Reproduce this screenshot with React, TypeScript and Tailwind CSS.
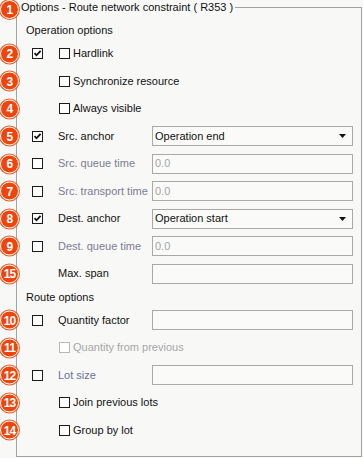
import React from 'react';

type Field = { kind: 'select'; value: string } | { kind: 'input'; placeholder?: string } | null;

type RowDef = {
    badge: string;
    outer: 'checked' | 'unchecked' | null;
    label: string;
    tone: 'normal' | 'muted' | 'lot';
    inner?: 'enabled' | 'disabled';
    field: Field;
};

const operationRows: RowDef[] = [
    { badge: '2', outer: 'checked', label: 'Hardlink', tone: 'normal', inner: 'enabled', field: null },
    { badge: '3', outer: null, label: 'Synchronize resource', tone: 'normal', inner: 'enabled', field: null },
    { badge: '4', outer: null, label: 'Always visible', tone: 'normal', inner: 'enabled', field: null },
    { badge: '5', outer: 'checked', label: 'Src. anchor', tone: 'normal', field: { kind: 'select', value: 'Operation end' } },
    { badge: '6', outer: 'unchecked', label: 'Src. queue time', tone: 'muted', field: { kind: 'input', placeholder: '0.0' } },
    { badge: '7', outer: 'unchecked', label: 'Src. transport time', tone: 'muted', field: { kind: 'input', placeholder: '0.0' } },
    { badge: '8', outer: 'checked', label: 'Dest. anchor', tone: 'normal', field: { kind: 'select', value: 'Operation start' } },
    { badge: '9', outer: 'unchecked', label: 'Dest. queue time', tone: 'muted', field: { kind: 'input', placeholder: '0.0' } },
    { badge: '15', outer: null, label: 'Max. span', tone: 'normal', field: { kind: 'input' } },
];

const routeRows: RowDef[] = [
    { badge: '10', outer: 'unchecked', label: 'Quantity factor', tone: 'normal', field: { kind: 'input' } },
    { badge: '11', outer: null, label: 'Quantity from previous', tone: 'normal', inner: 'disabled', field: null },
    { badge: '12', outer: 'unchecked', label: 'Lot size', tone: 'lot', field: { kind: 'input' } },
    { badge: '13', outer: null, label: 'Join previous lots', tone: 'normal', inner: 'enabled', field: null },
    { badge: '14', outer: null, label: 'Group by lot', tone: 'normal', inner: 'enabled', field: null },
];

function Badge({ n }: { n: string }) {
    return (
        <div className="w-[19px] h-[19px] rounded-full bg-[#ef440c] border border-white shadow-[0_0_0_1px_#e8602c] flex items-center justify-center text-white font-bold text-[12px] leading-none tracking-[-0.8px] font-['Liberation_Sans',Arial,sans-serif]">
            {n}
        </div>
    );
}

function Box({ state }: { state: 'checked' | 'unchecked' | 'disabled' }) {
    const border = state === 'disabled' ? 'border-[#b8b8b8]' : 'border-[#1c1c1c]';
    return (
        <div className={`w-[11px] h-[11px] shrink-0 border ${border} bg-white flex items-center justify-center`}>
            {state === 'checked' && (
                <svg width="9" height="9" viewBox="0 0 9 9">
                    <path d="M1.5 4.2 L3.5 6.3 L7.6 1.8" fill="none" stroke="#111" strokeWidth="1.8" />
                </svg>
            )}
        </div>
    );
}

function FieldBox({ field }: { field: Field }) {
    if (!field) return null;
    return (
        <div className="w-[201px] h-[20px] shrink-0 border border-[#a9a9a9] bg-[#fafbf9] flex items-center pl-[2px] pr-[6px]">
            {field.kind === 'select' ? (
                <>
                    <span className="flex-1 text-[#111]">{field.value}</span>
                    <svg width="7" height="4" viewBox="0 0 7 4">
                        <path d="M0 0 H7 L3.5 4 Z" fill="#111" />
                    </svg>
                </>
            ) : (
                <span className="text-[#a3a3a3]">{field.placeholder ?? ''}</span>
            )}
        </div>
    );
}

function Row({ row }: { row: RowDef }) {
    const tone =
        row.tone === 'muted' ? 'text-[#7c7c92]' : row.tone === 'lot' ? 'text-[#6a6f9c]' : 'text-[#111]';
    return (
        <div className="relative flex items-center h-[27.5px] pl-[15px]">
            <div className="absolute left-[-17px] top-1/2 -translate-y-1/2">
                <Badge n={row.badge} />
            </div>
            <div className="w-[11px] h-[11px] shrink-0">
                {row.outer && <Box state={row.outer} />}
            </div>
            {row.inner ? (
                <div className="ml-[16px] flex items-center whitespace-nowrap">
                    <Box state={row.inner === 'disabled' ? 'disabled' : 'unchecked'} />
                    <span className={`ml-[3px] ${row.inner === 'disabled' ? 'text-[#a6a6a6]' : 'text-[#111]'}`}>{row.label}</span>
                </div>
            ) : (
                <>
                    <div className={`ml-[15px] w-[94px] shrink-0 whitespace-nowrap ${tone}`}>{row.label}</div>
                    <FieldBox field={row.field} />
                </>
            )}
        </div>
    );
}

export default function App() {
    return (
        <div className="relative w-[363px] h-[458px] bg-[#f8f9f7] font-['Liberation_Sans',Arial,sans-serif] text-[11px] leading-[15px] overflow-hidden">
            <div className="absolute left-0 top-0">
                <Badge n="1" />
            </div>
            <fieldset className="ml-[16px] w-[346px] h-[457px] border border-[#a3a3a3] p-0 m-0">
                <legend className="ml-[3px] pl-[1px] pr-[2px] leading-[15px] text-[#111]">
                    Options - Route network constraint ( R353 )
                </legend>

                {/* Operation options */}
                <div className="mt-[6px] h-[19px] flex items-center pl-[9px] text-[#111]">Operation options</div>
                {operationRows.map((r) => (
                    <Row key={r.badge} row={r} />
                ))}

                {/* Route options */}
                <div className="h-[19px] flex items-center pl-[9px] text-[#111]">Route options</div>
                {routeRows.map((r) => (
                    <Row key={r.badge} row={r} />
                ))}
            </fieldset>
        </div>
    );
}
